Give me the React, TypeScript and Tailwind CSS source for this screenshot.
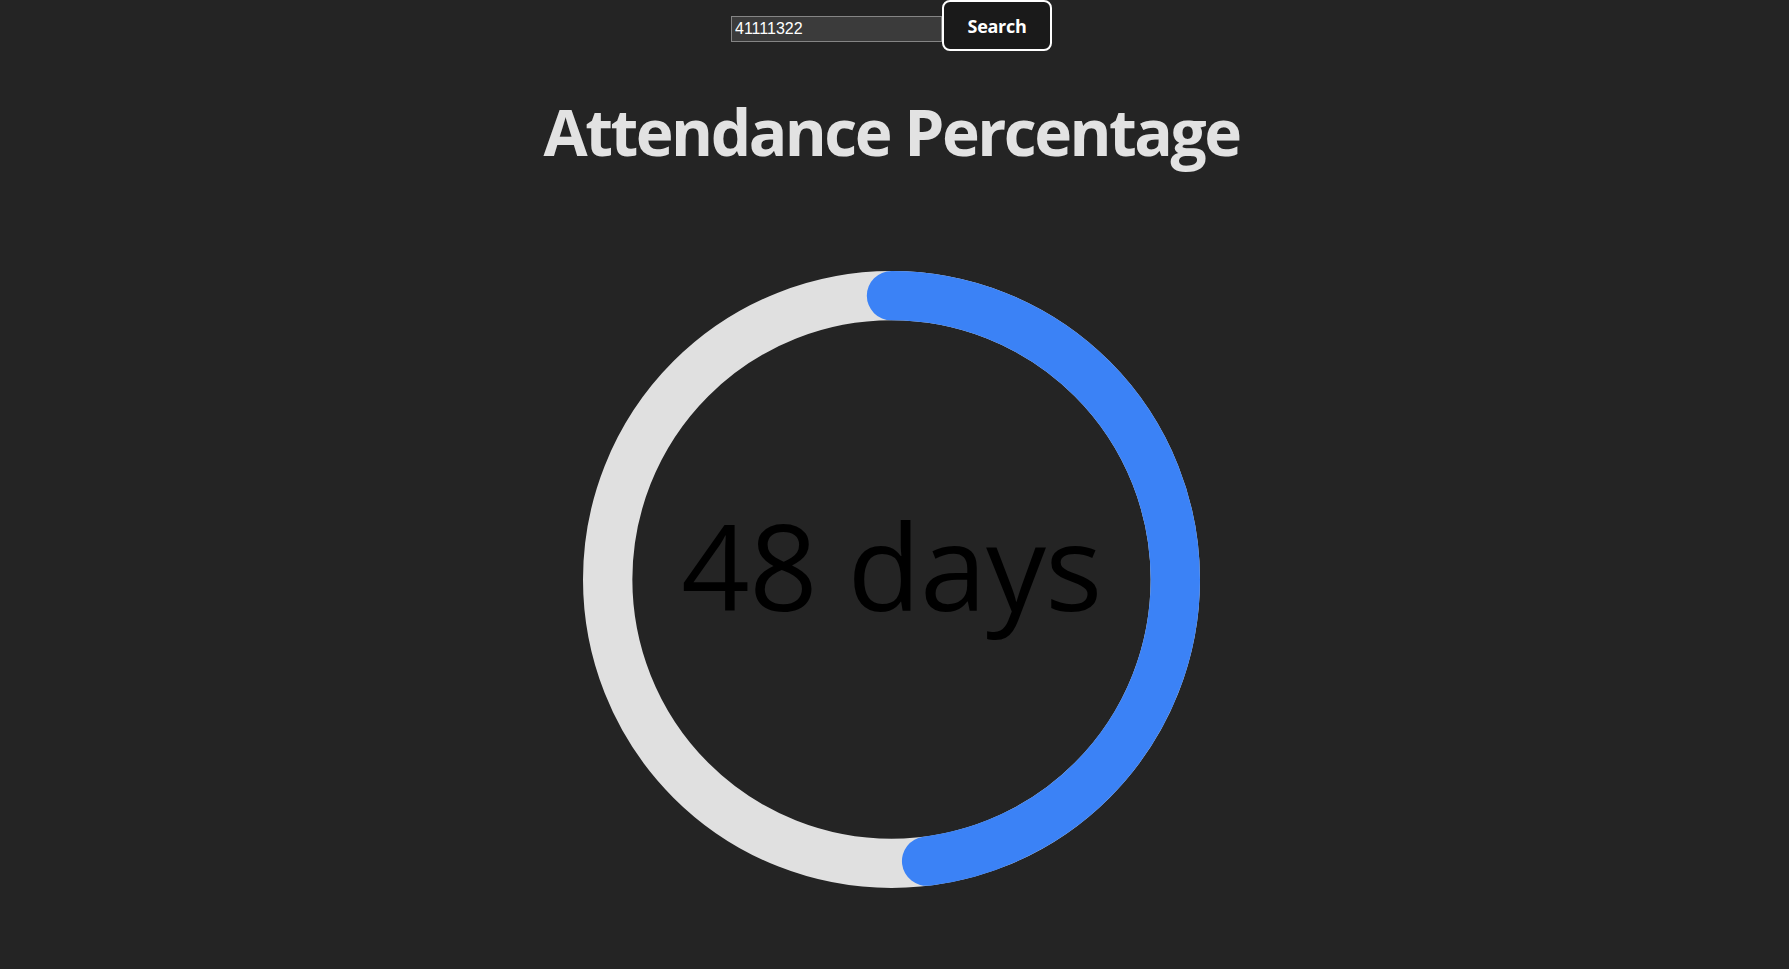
import React from "react";

function Ring({ value }: { value: number }) {
  const r = 46;
  const c = 2 * Math.PI * r;
  const offset = c * (1 - value / 100);
  return (
    <svg width="617" height="617" viewBox="0 0 100 100" className="block">
      <path
        d="M 50,50 m 0,-46 a 46,46 0 1 1 0,92 a 46,46 0 1 1 0,-92"
        fill="none"
        stroke="#e0e0e0"
        strokeWidth="8"
      />
      <path
        d="M 50,50 m 0,-46 a 46,46 0 1 1 0,92 a 46,46 0 1 1 0,-92"
        fill="none"
        stroke="#3b82f6"
        strokeWidth="8"
        strokeLinecap="round"
        strokeDasharray={`${c}px ${c}px`}
        strokeDashoffset={`${offset}px`}
      />
      <text
        x="50"
        y="55.1"
        textAnchor="middle"
        fill="#000000"
        fontSize="19.4"
        letterSpacing="-0.1"
        style={{ fontFamily: '"Open Sans", "Noto Sans", sans-serif' }}
      >
        48 days
      </text>
    </svg>
  );
}

export default function App() {
  return (
    <div className="min-h-[969px] w-full bg-[#242424] flex flex-col items-center pr-[6px] font-['Open_Sans','Noto_Sans',sans-serif]">
      <div className="flex items-start">
        <input
          defaultValue="41111322"
          className="mt-[16px] w-[211px] h-[26px] bg-[#3b3b3b] border border-[#858585] px-[3px] text-[16px] leading-none text-white font-['Liberation_Sans',Arial,sans-serif] outline-none"
        />
        <button className="w-[110px] h-[51px] bg-[#1a1a1a] border-2 border-white rounded-[8px] text-white text-[18px] font-bold leading-none tracking-[-0.3px]">
          Search
        </button>
      </div>
      <h1 className="mt-[46px] text-[64px] leading-[1.1] font-bold text-[#e2e2e2] tracking-[-2.5px]">
        Attendance Percentage
      </h1>
      <div className="mt-[104px]">
        <Ring value={48} />
      </div>
    </div>
  );
}
